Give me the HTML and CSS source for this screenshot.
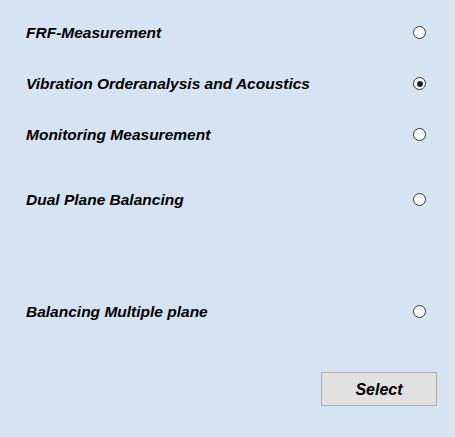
FILE: index.html
```html
<!DOCTYPE html>
<html>
<head>
<meta charset="utf-8">
<link rel="stylesheet" href="styles.css">
</head>
<body>
<div class="panel">
  <label class="row r1"><span class="txt">FRF-Measurement</span><span class="radio"></span></label>
  <label class="row r2"><span class="txt">Vibration Orderanalysis and Acoustics</span><span class="radio on"></span></label>
  <label class="row r3"><span class="txt">Monitoring Measurement</span><span class="radio"></span></label>
  <label class="row r4"><span class="txt">Dual Plane Balancing</span><span class="radio"></span></label>
  <label class="row r5"><span class="txt">Balancing Multiple plane</span><span class="radio"></span></label>
  <div class="actions"><button class="btn">Select</button></div>
</div>
</body>
</html>
```
FILE: styles.css
```css
html, body {
  margin: 0;
  padding: 0;
  background: #d5e3f2;
  width: 455px;
  height: 437px;
  overflow: hidden;
}
.panel {
  display: flex;
  flex-direction: column;
  padding: 23px 0 0 26px;
  font-family: "Liberation Sans", Arial, sans-serif;
  font-weight: bold;
  font-style: italic;
  font-size: 15.5px;
  color: #000;
}
.row {
  display: flex;
  align-items: center;
  justify-content: space-between;
  height: 20px;
  width: 400px;
}
.r2 { margin-top: 31px; }
.r3 { margin-top: 31px; }
.r4 { margin-top: 45px; }
.r5 { margin-top: 92px; }
.radio {
  width: 11px;
  height: 11px;
  border: 1px solid #333;
  border-radius: 50%;
  background: #fff;
  box-sizing: content-box;
  position: relative;
  margin-top: -1px;
}
.radio.on::after {
  content: "";
  position: absolute;
  left: 2.5px;
  top: 2.5px;
  width: 6px;
  height: 6px;
  border-radius: 50%;
  background: #222;
}
.actions {
  display: flex;
  justify-content: flex-end;
  margin-top: 50px;
  width: 411px;
}
.btn {
  width: 116px;
  height: 34px;
  background: #e1e1e1;
  border: 1px solid #adadad;
  font: inherit;
  font-size: 16px;
  color: #000;
  padding: 2px 0 0 0;
}
```
